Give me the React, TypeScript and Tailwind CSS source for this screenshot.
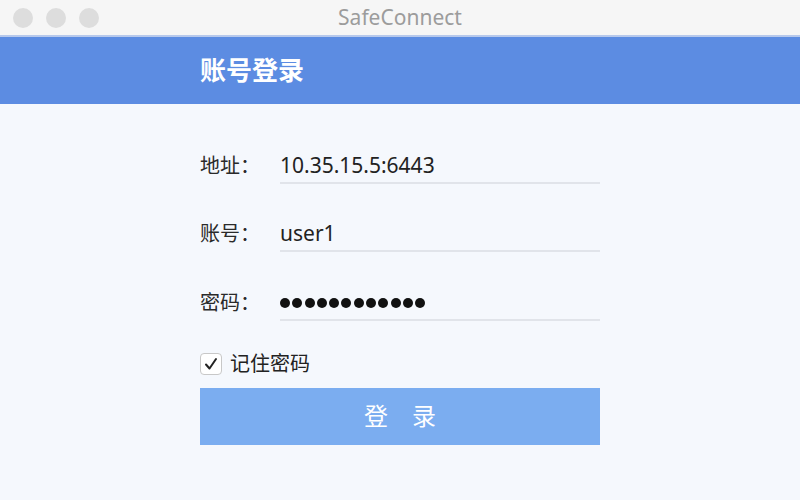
import React from "react";

const font = { fontFamily: '"Noto Sans", "Noto Sans CJK SC", sans-serif' };

function Row({ label, children }: { label: string; children: React.ReactNode }) {
  return (
    <div className="flex items-end h-[68.5px]">
      <div className="w-[80px] text-[20px] text-[#2a2a2a] leading-none pb-[8px]">{label}</div>
      <div className="w-[320px] h-[32px] border-b-2 border-[#e1e4ea] pb-[6px] text-[21px] text-[#222] leading-none flex items-end">
        {children}
      </div>
    </div>
  );
}

export default function App() {
  const dots = Array.from({ length: 12 });
  return (
    <div className="w-[800px] h-[500px] bg-[#f5f8fd] flex flex-col overflow-hidden" style={font}>
      <div className="h-[37px] bg-[#f6f6f6] flex items-center relative border-b-2 border-[#b7c9ec]">
        <div className="flex gap-[13px] pl-[13px]">
          <div className="w-[20px] h-[20px] rounded-full bg-[#dddddd]" />
          <div className="w-[20px] h-[20px] rounded-full bg-[#dddddd]" />
          <div className="w-[20px] h-[20px] rounded-full bg-[#dddddd]" />
        </div>
        <div className="absolute inset-0 flex items-center justify-center text-[21px] text-[#9c9c9c]">SafeConnect</div>
      </div>
      <div className="h-[67px] bg-[#5c8ce2] flex items-center pl-[200px]">
        <span className="text-white text-[26px] font-semibold">账号登录</span>
      </div>
      <div className="pl-[200px] pt-[11px]">
        <Row label="地址：">10.35.15.5:6443</Row>
        <Row label="账号：">user1</Row>
        <Row label="密码：">
          <div className="flex gap-[2.3px] items-center h-[18px] pb-[2px]">
            {dots.map((_, i) => (
              <span key={i} className="w-[10px] h-[10px] rounded-full bg-[#111]" />
            ))}
          </div>
        </Row>
        <div className="flex items-center mt-[31px] h-[24px]">
          <div className="w-[22px] h-[22px] rounded-[4px] border border-[#c8c8c8] bg-white flex items-center justify-center">
            <svg width="16" height="16" viewBox="0 0 16 16">
              <path d="M3 8.5 L6.5 12.5 L13 3" stroke="#222" strokeWidth="2" fill="none" strokeLinecap="round" strokeLinejoin="round" />
            </svg>
          </div>
          <span className="ml-[8px] text-[20px] text-[#222]">记住密码</span>
        </div>
        <div className="mt-[12px] w-[400px] h-[57px] bg-[#7badf0] flex items-center justify-center text-white text-[24px]">
          登　录
        </div>
      </div>
    </div>
  );
}
